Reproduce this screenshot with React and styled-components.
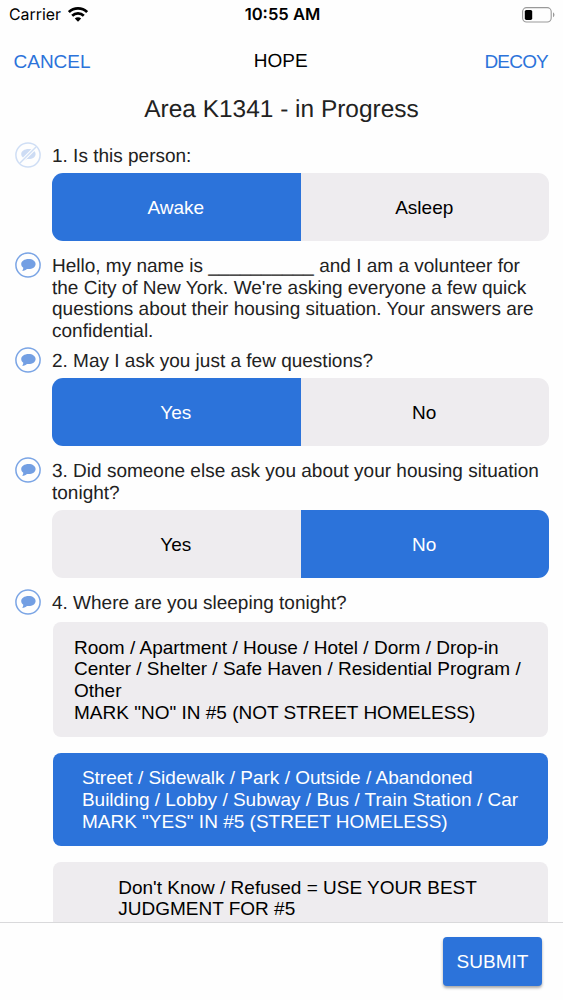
import React, { useState } from 'react';
import styled, { createGlobalStyle } from 'styled-components';

const blue = '#2c73da';
const grey = '#eeecef';

export default function App() {
    const [answers, setAnswers] = useState({ person: 'Awake', ask: 'Yes', asked: 'No', place: 1 });
    const answer = (key, value) => setAnswers({ ...answers, [key]: value });

    return (
        <Screen>
            <GlobalStyle />
            <StatusBar>
                <Carrier>Carrier <WifiIcon /></Carrier>
                <Time>10:55 AM</Time>
                <BatteryIcon />
            </StatusBar>
            <NavBar>
                <NavButton>CANCEL</NavButton>
                <NavTitle>HOPE</NavTitle>
                <NavButton $right>DECOY</NavButton>
            </NavBar>
            <Survey>
                <Title>Area K1341 - in Progress</Title>
                <Question $gap={14}>
                    <SpeechIcon muted />
                    <div>
                        <Prompt>1. Is this person:</Prompt>
                        <Segment options={['Awake', 'Asleep']} value={answers.person} onPick={(v) => answer('person', v)} />
                    </div>
                </Question>
                <Question $gap={8}>
                    <SpeechIcon />
                    <Prompt>{'Hello, my name is __________ and I am a volunteer for\nthe City of New York. We\'re asking everyone a few quick\nquestions about their housing situation. Your answers are\nconfidential.'}</Prompt>
                </Question>
                <Question $gap={14}>
                    <SpeechIcon />
                    <div>
                        <Prompt>2. May I ask you just a few questions?</Prompt>
                        <Segment options={['Yes', 'No']} value={answers.ask} onPick={(v) => answer('ask', v)} />
                    </div>
                </Question>
                <Question $gap={14}>
                    <SpeechIcon />
                    <div>
                        <Prompt>{'3. Did someone else ask you about your housing situation\ntonight?'}</Prompt>
                        <Segment options={['Yes', 'No']} value={answers.asked} onPick={(v) => answer('asked', v)} />
                    </div>
                </Question>
                <Question $gap={0}>
                    <SpeechIcon />
                    <div>
                        <Prompt>4. Where are you sleeping tonight?</Prompt>
                        <Choices>
                            {places.map((place, i) => (
                                <Choice key={place} $active={answers.place === i} onClick={() => answer('place', i)}>
                                    <span>{place}</span>
                                </Choice>
                            ))}
                        </Choices>
                    </div>
                </Question>
            </Survey>
            <Footer>
                <Submit>SUBMIT</Submit>
            </Footer>
        </Screen>
    );
}

const places = [
    'Room / Apartment / House / Hotel / Dorm / Drop-in\nCenter / Shelter / Safe Haven / Residential Program / \nOther\nMARK "NO" IN #5 (NOT STREET HOMELESS)',
    'Street / Sidewalk / Park / Outside / Abandoned\nBuilding / Lobby / Subway / Bus / Train Station / Car\nMARK "YES" IN #5 (STREET HOMELESS)',
    'Don\'t Know / Refused = USE YOUR BEST \nJUDGMENT FOR #5',
];

function Segment({ options, value, onPick }) {
    return (
        <SegmentBar>
            {options.map((option) => (
                <SegmentButton key={option} $active={option === value} onClick={() => onPick(option)}>
                    {option}
                </SegmentButton>
            ))}
        </SegmentBar>
    );
}

//icons
function SpeechIcon({ muted }) {
    return (
        <Bubble $muted={muted} viewBox="0 0 26 26">
            <circle cx="13" cy="13" r="12.1" fill="none" stroke="#7ba5e5" strokeWidth="1.5" />
            <path d="M13.600 7C9.400 7 6.200 9.200 6.200 12.100c0 1.700.9 2.900 2.100 3.700 0 1.200-.5 2.200-1.100 3 2 .1 3.600-.7 4.700-1.800.5.1 1.100.1 1.700.1 4 0 7-2.200 7-5.100S17.600 7 13.600 7z" fill="#739fe3" />
            {muted && <path d="M5 21L21 5" stroke="#fff" strokeWidth="3.600" />}
            {muted && <path d="M4.500 21.500L21.500 4.500" stroke="#7ba5e5" strokeWidth="1.500" />}
        </Bubble>
    );
}

function WifiIcon() {
    return (
        <svg width="20" height="15" viewBox="0 0 20 15">
            <g fill="none" stroke="#000" strokeWidth="2.700">
                <path d="M.9 5.100a13 13 0 0 1 18.200 0" />
                <path d="M4.200 8.700a8.300 8.300 0 0 1 11.600 0" />
            </g>
            <path d="M10 14.700l-3.200-3.200a4.600 4.600 0 0 1 6.400 0z" />
        </svg>
    );
}

function BatteryIcon() {
    return (
        <svg width="34" height="16" viewBox="0 0 34 16">
            <rect x=".6" y=".6" width="28.600" height="14.400" rx="4" fill="none" stroke="#999" strokeWidth="1.100" />
            <rect x="2.800" y="2.900" width="7.400" height="10" rx="1.600" />
            <path d="M31 5.600c1.900.7 1.900 3.900 0 4.600z" fill="#999" />
        </svg>
    );
}

const GlobalStyle = createGlobalStyle`
    * {
        box-sizing: border-box;
    }
    body {
        margin: 0;
        background: #fefefe;
        font-family: "Liberation Sans", Arial, sans-serif;
        font-size: 19px;
        color: #222;
        text-rendering: geometricPrecision;
    }
    button {
        border: none;
        padding: 0;
        background: none;
        font: inherit;
    }
`;

const Screen = styled.div`
    display: flex;
    flex-direction: column;
    height: 1000px;
    overflow: hidden;
`;

const StatusBar = styled.div`
    display: grid;
    grid-template-columns: 1fr auto 1fr;
    align-items: center;
    height: 30px;
    padding: 0 7px 1px 9px;
    font-family: Inter, sans-serif;
    color: #000;
    > svg {
        justify-self: end;
    }
`;

const Carrier = styled.div`
    display: flex;
    align-items: center;
    gap: 7px;
    font-size: 15.9px;
`;

const Time = styled.div`
    font-size: 16.6px;
    font-weight: 600;
`;

const NavBar = styled.div`
    display: grid;
    grid-template-columns: 1fr auto 1fr;
    align-items: center;
    height: 62px;
    padding: 1px 15px 0 13.5px;
`;

const NavButton = styled.button`
    justify-self: ${(props) => (props.$right ? 'end' : 'start')};
    letter-spacing: ${(props) => (props.$right ? '-0.8px' : 'normal')};
    color: ${blue};
`;

const NavTitle = styled.div`
    padding-top: 1px;
    color: #000;
`;

const Survey = styled.div`
    flex: 1;
    min-height: 0;
    overflow: hidden;
    padding: 0 14px;
`;

const Title = styled.h1`
    margin: 0 0 18px;
    font-size: 24.45px;
    line-height: 35px;
    font-weight: 400;
    text-align: center;
`;

const Question = styled.div`
    display: grid;
    grid-template-columns: 26px 497px;
    column-gap: 12px;
    align-items: start;
    margin-bottom: ${(props) => props.$gap}px;
`;

const Bubble = styled.svg`
    width: 26px;
    height: 26px;
    margin: -2.800px 0 0 0.5px;
    opacity: ${(props) => (props.$muted ? 0.35 : 1)};
`;

const Prompt = styled.p`
    margin: 0 0 -0.6px;
    padding-top: 0.6px;
    line-height: 21.7px;
    white-space: pre;
`;

const SegmentBar = styled.div`
    display: grid;
    grid-template-columns: 1fr 1fr;
    height: 68px;
    margin-top: 6.500px;
    border-radius: 11px;
    overflow: hidden;
`;

const SegmentButton = styled.button`
    padding: 1px 1px 0 0;
    background: ${(props) => (props.$active ? blue : grey)};
    color: ${(props) => (props.$active ? '#fff' : '#000')};
`;

const Choices = styled.div`
    display: grid;
    gap: 16px;
    margin: 8.500px 1px 0;
`;

const Choice = styled.button`
    display: flex;
    justify-content: center;
    padding: 14.300px 1px 13.700px 0;
    border-radius: 8px;
    background: ${(props) => (props.$active ? blue : grey)};
    color: ${(props) => (props.$active ? '#fff' : '#000')};
    line-height: 21.7px;
    text-align: left;
    white-space: pre;
`;

const Footer = styled.div`
    display: flex;
    justify-content: flex-end;
    height: 78px;
    padding: 14px 21px 0 0;
    border-top: 1px solid #d9d9db;
`;

const Submit = styled.button`
    width: 99px;
    height: 49px;
    border-radius: 4px;
    background: ${blue};
    color: #fff;
    box-shadow: 0 2px 3px rgba(0, 0, 0, 0.35);
`;
